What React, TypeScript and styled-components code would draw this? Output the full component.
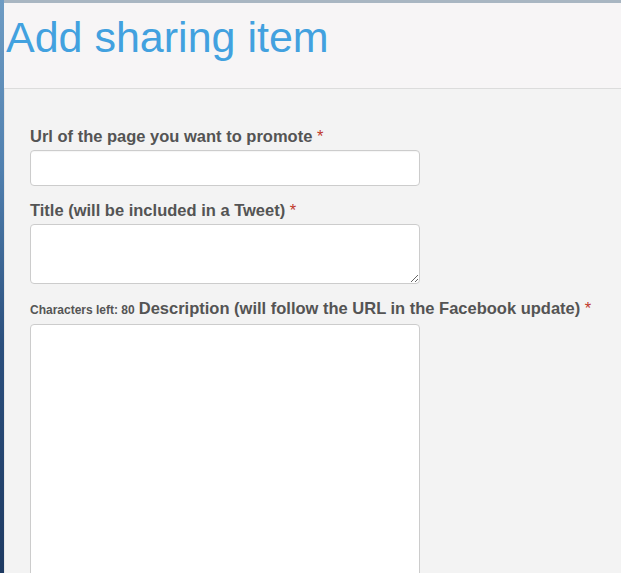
import React from "react";
import styled, { createGlobalStyle } from "styled-components";

const Global = createGlobalStyle`
  html, body { margin: 0; padding: 0; }
  body { background: #f3f3f3; font-family: "Liberation Sans", Arial, sans-serif; overflow: hidden; }
`;

const Frame = styled.div`
  display: flex;
  width: 621px;
  height: 573px;
  overflow: hidden;
`;

const DesktopStrip = styled.div`
  width: 4px;
  flex: none;
  background: linear-gradient(to bottom, #6f9cc4 0%, #4f7fae 30%, #2b4f7d 60%, #1e3a62 100%);
`;

const Window = styled.div`
  flex: 1;
  display: flex;
  flex-direction: column;
  border-top: 3px solid #a9b6c2;
  min-width: 0;
`;

const Header = styled.header`
  flex: none;
  height: 86px;
  background: #f7f5f6;
  border-bottom: 1px solid #dcdcdc;
  padding-left: 2px;
  box-sizing: border-box;
`;

const PageTitle = styled.h1`
  margin: 0;
  padding-top: 9px;
  font-family: "Liberation Sans", Arial, sans-serif;
  font-weight: normal;
  font-size: 43px;
  line-height: 50px;
  color: #42a1df;
`;

const Body = styled.main`
  flex: none;
  background: #f3f3f3;
  border-left: 1px solid #e6e6e6;
  padding: 37px 0 0 25px;
  display: flex;
  flex-direction: column;
`;

const Field = styled.div`
  display: flex;
  flex-direction: column;
  gap: 4px;
  margin-bottom: 14px;
`;

const Label = styled.label`
  font-size: 16.5px;
  line-height: 20px;
  font-weight: bold;
  color: #545454;
  white-space: nowrap;
`;

const Counter = styled.span`
  font-size: 12px;
  font-weight: bold;
  color: #555;
  margin-right: 4px;
`;

const Req = styled.span`
  color: #c0392b;
  font-weight: normal;
`;

const TextInput = styled.input`
  box-sizing: border-box;
  width: 390px;
  height: 36px;
  border: 1px solid #cccccc;
  border-radius: 4px;
  background: #fff;
  box-shadow: inset 0 1px 1px rgba(0,0,0,0.04);
  outline: none;
  flex: none;
`;

const TextArea = styled.textarea<{ $h: number }>`
  box-sizing: border-box;
  width: 390px;
  height: ${p => p.$h}px;
  border: 1px solid #cccccc;
  border-radius: 4px;
  background: #fff;
  resize: vertical;
  outline: none;
  flex: none;
`;

export default function App() {
  return (
    <>
      <Global />
      <Frame>
        <DesktopStrip />
        <Window>
          <Header>
            <PageTitle>Add sharing item</PageTitle>
          </Header>
          <Body>
            <Field>
              <Label>
                Url of the page you want to promote <Req>*</Req>
              </Label>
              <TextInput type="text" />
            </Field>
            <Field>
              <Label>
                Title (will be included in a Tweet) <Req>*</Req>
              </Label>
              <TextArea $h={60} />
            </Field>
            <Field>
              <Label>
                <Counter>Characters left: 80</Counter>
                Description (will follow the URL in the Facebook update) <Req>*</Req>
              </Label>
              <TextArea $h={300} />
            </Field>
          </Body>
        </Window>
      </Frame>
    </>
  );
}
